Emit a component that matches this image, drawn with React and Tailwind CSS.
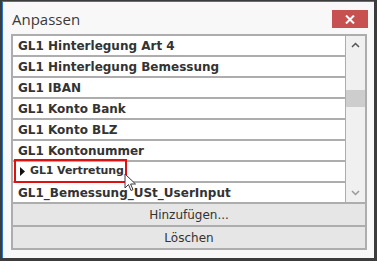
import React from 'react';

const items = [
  'GL1 Hinterlegung Art 4',
  'GL1 Hinterlegung Bemessung',
  'GL1 IBAN',
  'GL1 Konto Bank',
  'GL1 Konto BLZ',
  'GL1 Kontonummer',
  'GL1 Vertretung',
  'GL1_Bemessung_USt_UserInput',
];

function Cursor() {
  return (
    <svg className="absolute left-[124px] top-[173px]" width="14" height="20" viewBox="0 0 14 20">
      <path
        d="M1 1 L1 15 L4.5 11.5 L7 17.5 L9 16.7 L6.6 11 L11.5 11 Z"
        fill="#ffffff"
        stroke="#3a3a3a"
        strokeWidth="1"
        strokeLinejoin="round"
      />
    </svg>
  );
}

export default function App() {
  return (
    <div
      className="relative w-[377px] h-[261px] bg-[#3c3c3c] pt-px pl-[2px] pr-[3px] pb-[3px]"
      style={{ fontFamily: '"DejaVu Sans", Tahoma, sans-serif' }}
    >
      <div className="w-full h-full bg-[#f8f8f8] border-l border-t border-[#2b79d0] flex flex-col">
        {/* Titelzeile */}
        <div className="h-[32px] flex items-center justify-between pl-[9px] pr-[6px]">
          <span className="text-[15px] text-[#3a3a3a] leading-none mt-[3px]" style={{ fontFamily: '"Open Sans", sans-serif' }}>
            Anpassen
          </span>
          <button className="w-[36px] h-[18px] bg-[#c75050] flex items-center justify-center mt-[2px]">
            <svg width="10" height="9" viewBox="0 0 10 9">
              <path d="M1 0.5 L9 8.5 M9 0.5 L1 8.5" stroke="#ffffff" strokeWidth="2" />
            </svg>
          </button>
        </div>

        {/* Liste */}
        <div className="ml-[8px] w-[356px] border-2 border-[#adadad] bg-white flex flex-col">
          <div className="flex">
            <div className="flex-1 flex flex-col">
              {items.map((item, i) => (
                <div key={item} className="h-[21px] border-b-2 border-[#adadad] flex items-center pl-[5px] relative">
                  {i === 6 ? (
                    <div className="absolute left-[1px] top-[-3px] w-[113px] h-[24px] border-2 border-[#e01010] flex items-center pl-[4px] whitespace-nowrap">
                      <svg width="6" height="9" viewBox="0 0 6 9" className="mr-[4px] shrink-0">
                        <path d="M0 0 L5 4.5 L0 9 Z" fill="#111111" />
                      </svg>
                      <span className="text-[11px] font-bold text-[#333333] tracking-[-0.1px]">{item}</span>
                    </div>
                  ) : (
                    <span className="text-[12px] font-bold text-[#333333] whitespace-nowrap">{item}</span>
                  )}
                </div>
              ))}
            </div>
            {/* Scrollbar */}
            <div className="w-[20px] bg-[#f0f0f0] border-l border-[#adadad] flex flex-col items-center border-b-2">
              <svg width="9" height="6" viewBox="0 0 9 6" className="mt-[6px]">
                <path d="M1 5 L4.5 1.5 L8 5" stroke="#555555" strokeWidth="1.5" fill="none" />
              </svg>
              <div className="w-full h-[17px] bg-[#cdcdcd] mt-[42px]" />
              <div className="flex-1" />
              <svg width="9" height="6" viewBox="0 0 9 6" className="mb-[6px]">
                <path d="M1 1 L4.5 4.5 L8 1" stroke="#999999" strokeWidth="1.5" fill="none" />
              </svg>
            </div>
          </div>
          <button className="h-[23px] border-b-2 border-[#adadad] bg-[#e6e6e6] text-[12px] text-[#333333]">
            Hinzufügen...
          </button>
          <button className="h-[21px] bg-[#e6e6e6] text-[12px] text-[#333333]">Löschen</button>
        </div>
      </div>
      <Cursor />
    </div>
  );
}
